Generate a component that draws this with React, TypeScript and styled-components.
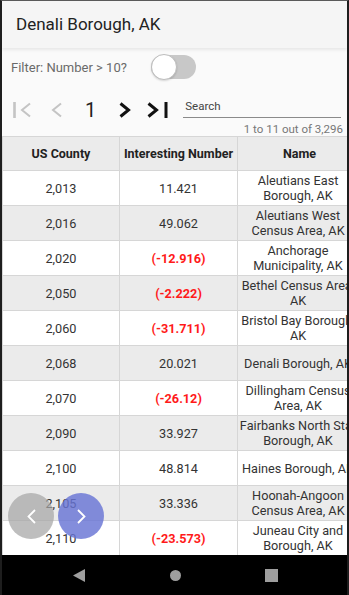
import styled, { createGlobalStyle } from "styled-components";

const Global = createGlobalStyle`
    html, body {
        margin: 0;
        padding: 0;
        background: #1e1e1e;
    }
    * {
        box-sizing: border-box;
    }
`;

const Phone = styled.div`
    width: 349px;
    height: 595px;
    display: flex;
    flex-direction: column;
    border-top: 1px solid #5a5a5a;
    border-left: 2px solid #1e1e1e;
    border-right: 2px solid #1e1e1e;
    font-family: Roboto, "Liberation Sans", sans-serif;
    overflow: hidden;
`;

const Screen = styled.div`
    position: relative;
    flex: 1;
    display: flex;
    flex-direction: column;
    background: #fafafa;
    overflow: hidden;
`;

const Header = styled.div`
    height: 47px;
    flex-shrink: 0;
    display: flex;
    align-items: center;
    padding-left: 14px;
    padding-bottom: 1px;
    background: #f5f5f5;
    box-shadow: 0 2px 3px rgba(0, 0, 0, 0.08);
    z-index: 1;
`;

const Title = styled.div`
    font-size: 17px;
    color: #222;
`;

const FilterRow = styled.div`
    height: 36px;
    flex-shrink: 0;
    display: flex;
    align-items: center;
    padding-left: 9px;
    padding-top: 2px;
`;

const FilterLabel = styled.div`
    font-size: 13px;
    color: #6a6a6a;
`;

const Switch = styled.div`
    position: relative;
    width: 45px;
    height: 24px;
    margin-left: 24px;
    border-radius: 12px;
    background: #c8c8c8;
`;

const Knob = styled.div`
    position: absolute;
    left: 0;
    top: -1px;
    width: 26px;
    height: 26px;
    border-radius: 50%;
    background: #fff;
    border: 1px solid #bdbdbd;
    box-shadow: 0 1px 2px rgba(0, 0, 0, 0.15);
`;

const PagerRow = styled.div`
    height: 32px;
    margin-top: 10px;
    flex-shrink: 0;
    display: flex;
    align-items: center;
    padding-left: 11px;
`;

const PagerButton = styled.div<{ $gap: number }>`
    margin-left: ${(p) => p.$gap}px;
    display: flex;
    align-items: center;
`;

const PageNumber = styled.div`
    margin-left: 23px;
    font-size: 20px;
    color: #222;
`;

const SearchBox = styled.div`
    margin-left: 15px;
    width: 158px;
    height: 22px;
    display: flex;
    align-items: flex-start;
    border-bottom: 1px solid #8a8a8a;
    font-size: 11.5px;
    color: #444;
    padding-top: 3px;
    padding-left: 2px;
    margin-top: -6px;
`;

const Count = styled.div`
    flex-shrink: 0;
    text-align: right;
    padding-right: 4px;
    font-size: 11.5px;
    color: #777;
    height: 15px;
    line-height: 15px;
    margin-top: -4px;
`;

const TableWrap = styled.div`
    flex: 1;
    overflow: hidden;
    margin-top: -1px;
`;

const Table = styled.table`
    width: 359px;
    table-layout: fixed;
    border-collapse: collapse;
    border-top: 1px solid #d6d6d6;
`;

const HeadCell = styled.th`
    height: 34px;
    background: #ebebeb;
    border: 1px solid #d6d6d6;
    border-top: none;
    font-size: 12.5px;
    font-weight: 700;
    color: #222;
    text-align: center;
    white-space: nowrap;
    padding: 0 1px;
`;

const Row = styled.tr<{ $odd: boolean }>`
    background: ${(p) => (p.$odd ? "#ebebeb" : "#ffffff")};
`;

const Cell = styled.td<{ $negative?: boolean }>`
    height: 35px;
    border: 1px solid #d6d6d6;
    text-align: center;
    font-size: 12.7px;
    line-height: 15px;
    padding: 0 2px;
    color: ${(p) => (p.$negative ? "#ff1a1a" : "#333")};
    font-weight: ${(p) => (p.$negative ? 700 : 400)};
    overflow: hidden;
`;

const NameCell = styled(Cell)`
    padding: 0 3px 0 0;
`;

const Fab = styled.div<{ $color: string; $left: number }>`
    position: absolute;
    left: ${(p) => p.$left}px;
    top: 492px;
    width: 46px;
    height: 46px;
    border-radius: 50%;
    background: ${(p) => p.$color};
    display: flex;
    align-items: center;
    justify-content: center;
`;

const NavBar = styled.div`
    height: 40px;
    flex-shrink: 0;
    background: #000;
    display: flex;
    align-items: center;
    padding-left: 29px;
`;

const NavIcon = styled.div`
    width: 96px;
    display: flex;
    justify-content: center;
`;

type Item = [string, string, string];

const rows: Item[] = [
    ["2,013", "11.421", "Aleutians East Borough, AK"],
    ["2,016", "49.062", "Aleutians West Census Area, AK"],
    ["2,020", "(-12.916)", "Anchorage Municipality, AK"],
    ["2,050", "(-2.222)", "Bethel Census Area, AK"],
    ["2,060", "(-31.711)", "Bristol Bay Borough, AK"],
    ["2,068", "20.021", "Denali Borough, AK"],
    ["2,070", "(-26.12)", "Dillingham Census Area, AK"],
    ["2,090", "33.927", "Fairbanks North Star Borough, AK"],
    ["2,100", "48.814", "Haines Borough, AK"],
    ["2,105", "33.336", "Hoonah-Angoon Census Area, AK"],
    ["2,110", "(-23.573)", "Juneau City and Borough, AK"],
];

function FirstIcon() {
    return (
        <svg width="19" height="18" viewBox="0 0 19 18" fill="none" stroke="#c4c4c4" strokeWidth="2.6">
            <path d="M1.5 1 V17" />
            <path d="M17 2.5 L9 9 L17 15.5" strokeWidth="2" />
        </svg>
    );
}

function PrevIcon() {
    return (
        <svg width="12" height="18" viewBox="0 0 12 18" fill="none" stroke="#c4c4c4" strokeWidth="2">
            <path d="M11 2.5 L3 9 L11 15.5" />
        </svg>
    );
}

function NextIcon() {
    return (
        <svg width="12" height="16" viewBox="0 0 12 16" fill="none" stroke="#111" strokeWidth="3">
            <path d="M1.5 1.5 L9.5 8 L1.5 14.5" />
        </svg>
    );
}

function LastIcon() {
    return (
        <svg width="21" height="18" viewBox="0 0 21 18" fill="none" stroke="#111" strokeWidth="3">
            <path d="M1.5 2.5 L9.5 9 L1.5 15.5" />
            <path d="M19 1 V17" />
        </svg>
    );
}

function FabChevron({ dir }: { dir: "left" | "right" }) {
    return (
        <svg width="9" height="15" viewBox="0 0 9 15" fill="none" stroke="#fff" strokeWidth="1.8">
            {dir === "left" ? <path d="M8 1 L1.5 7.5 L8 14" /> : <path d="M1 1 L7.5 7.5 L1 14" />}
        </svg>
    );
}

export default function App() {
    return (
        <Phone>
            <Global />
            <Screen>
                <Header>
                    <Title>Denali Borough, AK</Title>
                </Header>
                <FilterRow>
                    <FilterLabel>Filter: Number &gt; 10?</FilterLabel>
                    <Switch>
                        <Knob />
                    </Switch>
                </FilterRow>
                <PagerRow>
                    <PagerButton $gap={0}>
                        <FirstIcon />
                    </PagerButton>
                    <PagerButton $gap={18}>
                        <PrevIcon />
                    </PagerButton>
                    <PageNumber>1</PageNumber>
                    <PagerButton $gap={23}>
                        <NextIcon />
                    </PagerButton>
                    <PagerButton $gap={16}>
                        <LastIcon />
                    </PagerButton>
                    <SearchBox>Search</SearchBox>
                </PagerRow>
                <Count>1 to 11 out of 3,296</Count>
                <TableWrap>
                    <Table>
                        <colgroup>
                            <col style={{ width: 117 }} />
                            <col style={{ width: 118 }} />
                            <col style={{ width: 124 }} />
                        </colgroup>
                        <thead>
                            <tr>
                                <HeadCell>US County</HeadCell>
                                <HeadCell>Interesting Number</HeadCell>
                                <HeadCell>Name</HeadCell>
                            </tr>
                        </thead>
                        <tbody>
                            {rows.map((r, i) => (
                                <Row key={r[0]} $odd={i % 2 === 1}>
                                    <Cell>{r[0]}</Cell>
                                    <Cell $negative={r[1].startsWith("(")}>{r[1]}</Cell>
                                    <NameCell>{r[2]}</NameCell>
                                </Row>
                            ))}
                        </tbody>
                    </Table>
                </TableWrap>
                <Fab $color="rgba(165, 165, 165, 0.72)" $left={6}>
                    <FabChevron dir="left" />
                </Fab>
                <Fab $color="rgba(104, 116, 212, 0.82)" $left={56}>
                    <FabChevron dir="right" />
                </Fab>
            </Screen>
            <NavBar>
                <NavIcon>
                    <svg width="12" height="13" viewBox="0 0 12 13">
                        <path d="M12 0 V13 L0 6.5 Z" fill="#9e9e9e" />
                    </svg>
                </NavIcon>
                <NavIcon>
                    <svg width="11" height="11" viewBox="0 0 11 11">
                        <circle cx="5.5" cy="5.5" r="5.5" fill="#9e9e9e" />
                    </svg>
                </NavIcon>
                <NavIcon>
                    <svg width="13" height="13" viewBox="0 0 13 13">
                        <rect width="13" height="13" fill="#9e9e9e" />
                    </svg>
                </NavIcon>
            </NavBar>
        </Phone>
    );
}
